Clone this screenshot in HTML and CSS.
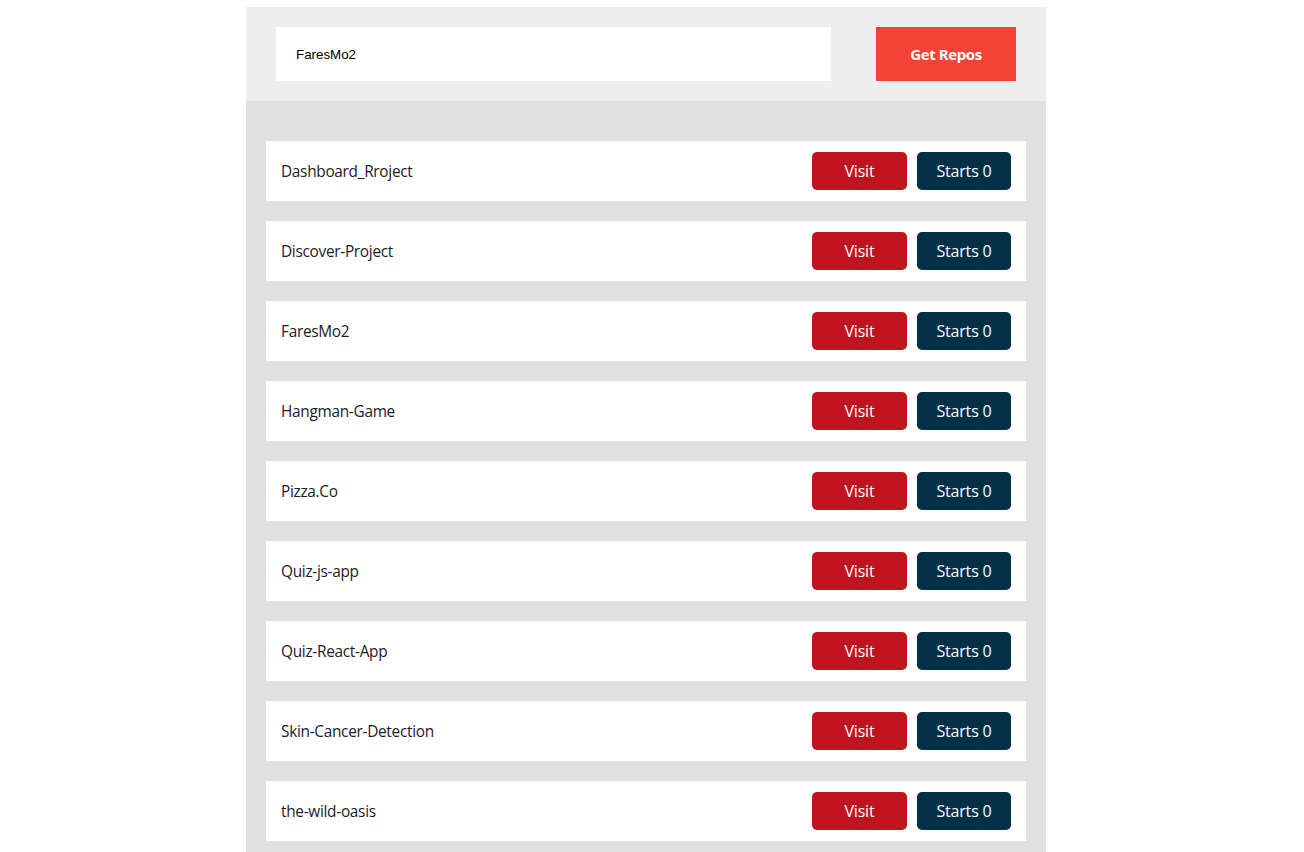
FILE: index.html
```html
<!DOCTYPE html>
<html>
<head>
<meta charset="utf-8">
<title>Repos</title>
<link rel="stylesheet" href="styles.css">
</head>
<body>
<div class="container">
  <div class="get-repos">
    <input class="repo-input" type="text" value="FaresMo2">
    <button class="get-btn">Get Repos</button>
  </div>
  <div class="repos">
    <div class="repo"><span class="name">Dashboard_Rroject</span><div class="actions"><a class="visit">Visit</a><span class="stars">Starts 0</span></div></div>
    <div class="repo"><span class="name">Discover-Project</span><div class="actions"><a class="visit">Visit</a><span class="stars">Starts 0</span></div></div>
    <div class="repo"><span class="name">FaresMo2</span><div class="actions"><a class="visit">Visit</a><span class="stars">Starts 0</span></div></div>
    <div class="repo"><span class="name">Hangman-Game</span><div class="actions"><a class="visit">Visit</a><span class="stars">Starts 0</span></div></div>
    <div class="repo"><span class="name">Pizza.Co</span><div class="actions"><a class="visit">Visit</a><span class="stars">Starts 0</span></div></div>
    <div class="repo"><span class="name">Quiz-js-app</span><div class="actions"><a class="visit">Visit</a><span class="stars">Starts 0</span></div></div>
    <div class="repo"><span class="name">Quiz-React-App</span><div class="actions"><a class="visit">Visit</a><span class="stars">Starts 0</span></div></div>
    <div class="repo"><span class="name">Skin-Cancer-Detection</span><div class="actions"><a class="visit">Visit</a><span class="stars">Starts 0</span></div></div>
    <div class="repo"><span class="name">the-wild-oasis</span><div class="actions"><a class="visit">Visit</a><span class="stars">Starts 0</span></div></div>
  </div>
</div>
</body>
</html>
```
FILE: styles.css
```css
* { box-sizing: border-box; }
body {
  margin: 0;
  padding: 7px 12px 0 0;
  background: #fff;
  font-family: "Open Sans", "DejaVu Sans", sans-serif;
}
.container {
  width: 800px;
  margin: 0 auto;
}
.get-repos {
  background: #eeeeee;
  padding: 20px 30px;
  display: flex;
  justify-content: space-between;
  height: 94px;
}
.repo-input {
  width: 555px;
  height: 54px;
  border: none;
  outline: none;
  background: #fff;
  padding: 0 20px;
  font-family: "Liberation Sans", Arial, sans-serif;
  font-size: 13.33px;
  color: #000;
}
.get-btn {
  width: 140px;
  height: 54px;
  border: none;
  background: #f44336;
  color: #fff;
  font-family: "Open Sans", sans-serif;
  font-weight: 700;
  font-size: 15px;
  letter-spacing: -0.4px;
}
.repos {
  background: #e0e0e0;
  padding: 40px 20px 20px;
  display: flex;
  flex-direction: column;
  gap: 20px;
}
.repo {
  background: #fff;
  height: 60px;
  padding: 0 15px;
  display: flex;
  align-items: center;
  justify-content: space-between;
  font-size: 15.4px;
  color: #1b1b2a;
  letter-spacing: -0.3px;
}
.actions {
  display: flex;
  gap: 10px;
}
.visit, .stars {
  height: 38px;
  display: flex;
  align-items: center;
  justify-content: center;
  border-radius: 5px;
  color: #fff;
  font-size: 16px;
  letter-spacing: -0.2px;
}
.visit {
  width: 95px;
  background: #c1121f;
}
.stars {
  width: 94px;
  background: #023047;
}
```
